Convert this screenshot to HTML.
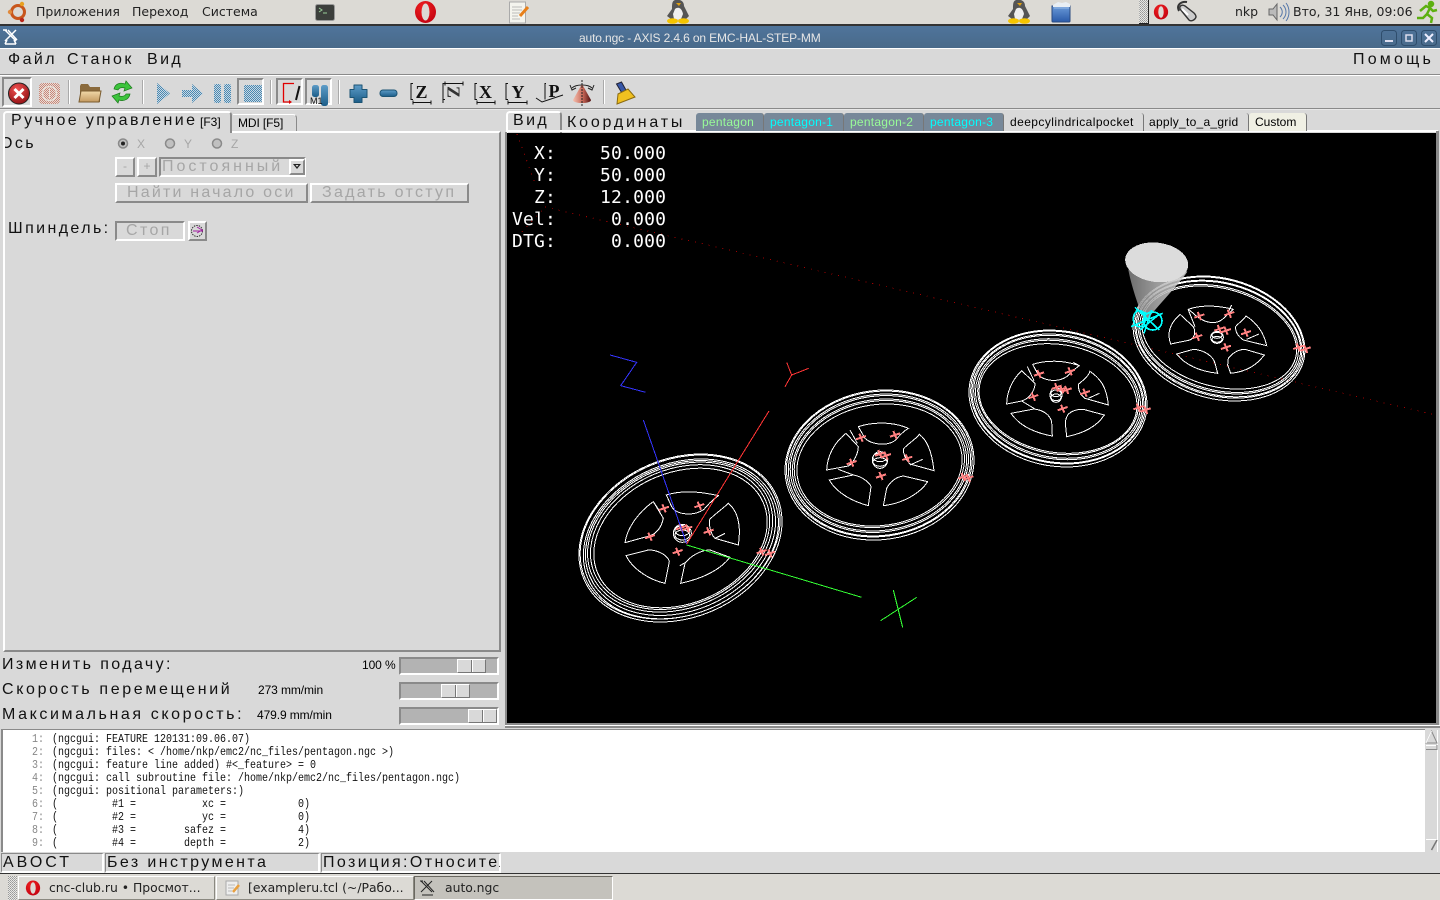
<!DOCTYPE html>
<html><head><meta charset="utf-8"><title>auto.ngc - AXIS</title>
<style>
html,body{margin:0;padding:0;width:1440px;height:900px;overflow:hidden;background:#d9d9d9}
body{position:relative;font-family:"Liberation Sans","Noto Sans CJK SC",sans-serif;color:#000}
.a{position:absolute}
.t{position:absolute;white-space:pre;font-size:16px;line-height:18px;letter-spacing:2.4px;color:#111}
.d{color:#a6a6a6}
.p{position:absolute;white-space:pre;font:12.5px/16px "DejaVu Sans",sans-serif;color:#222}
.s{position:absolute;white-space:pre;font-size:12px;line-height:14px}
.r{position:absolute;box-sizing:border-box;border:2px solid;border-color:#fff #8a8a8a #8a8a8a #fff;background:#d9d9d9}
.k{position:absolute;box-sizing:border-box;border:2px solid;border-color:#8a8a8a #fff #fff #8a8a8a;background:#d9d9d9}
.tr{position:absolute;box-sizing:border-box;border:2px solid;border-color:#8a8a8a #fff #fff #8a8a8a;background:#b3b3b3}
.kn{position:absolute;top:0;height:14px;width:29px;box-sizing:border-box;border:1px solid;border-color:#fff #777 #777 #fff;background:linear-gradient(90deg,#d9d9d9 0 13px,#777 13px 14px,#fff 14px 15px,#d9d9d9 15px)}
.tab{position:absolute;box-sizing:border-box;top:113px;height:18px;border-right:1px solid #777;border-radius:3px 3px 0 0;font-size:12px;line-height:19px;white-space:pre}
.l{position:absolute;left:52px;white-space:pre;font:12px/13px "Liberation Mono",monospace;transform:scaleX(.8333);transform-origin:0 0;color:#111}
.n{position:absolute;left:32px;white-space:pre;font:12px/13px "Liberation Mono",monospace;transform:scaleX(.8333);transform-origin:0 0;color:#888}
.dro{position:absolute;left:512px;white-space:pre;font:18px/22px "DejaVu Sans Mono",monospace;letter-spacing:.17px;color:#fff}
.tb{position:absolute;top:876px;height:24px;box-sizing:border-box;border:1px solid;border-color:#fff #8a8880 #8a8880 #fff;background:#dcdad5;font:12.4px/22px "DejaVu Sans",sans-serif;color:#222;white-space:pre}
</style></head><body>

<!-- top panel -->
<div class="a" style="left:0;top:0;width:1440px;height:25px;background:#dcdad5"></div>
<div class="a" style="left:0;top:24px;width:1440px;height:2px;background:#333"></div>
<span class="p" style="left:36px;top:4px">Приложения</span>
<span class="p" style="left:132px;top:4px">Переход</span>
<span class="p" style="left:202px;top:4px">Система</span>
<span class="p" style="left:1235px;top:4px">nkp</span>
<span class="p" style="left:1293px;top:4px">Вто, 31 Янв, 09:06</span>

<svg class="a" style="left:0;top:0" width="1440" height="26" viewBox="0 0 1440 26">
<defs>
<pattern id="hd" width="2" height="2" patternUnits="userSpaceOnUse"><rect width="2" height="2" fill="#e8e8e4"/><rect width="1" height="1" fill="#999"/><rect x="1" y="1" width="1" height="1" fill="#aaa"/></pattern>
<radialGradient id="op" cx=".4" cy=".3" r=".8"><stop offset="0" stop-color="#f02020"/><stop offset="1" stop-color="#c00010"/></radialGradient>
<g id="opera"><ellipse rx="10.500" ry="11" fill="url(#op)"/><ellipse rx="4" ry="8.500" fill="#dcdad5"/></g>
<g id="peng"><path d="M-3-12C2-13 6-11 6-6L8-2 11 4 8 7H-7L-11 4-6-3C-6-8-6-11-3-12Z" fill="#555"/><path d="M-3-3C1-6 4-3 5 2L3 7H-4L-5 2Z" fill="#eee"/><path d="M-2-9h5l-2 3Z" fill="#e0a010"/><ellipse cx="-5.500" cy="9" rx="5.500" ry="2.800" fill="#f5c400"/><ellipse cx="5.500" cy="9" rx="5.500" ry="2.800" fill="#f5c400"/></g>
<linearGradient id="fb" x1="0" y1="0" x2="0" y2="1"><stop offset="0" stop-color="#6a9ad8"/><stop offset="1" stop-color="#2a5aa8"/></linearGradient>
</defs>
<g transform="translate(18,12)"><circle r="6.500" fill="none" stroke="#c8561c" stroke-width="3"/><circle cx="-8" cy="0" r="2.200" fill="#e08a3c"/><circle cx="4" cy="-8" r="2.200" fill="#e8a020"/><circle cx="4" cy="8" r="2.200" fill="#b8261a"/></g>
<rect x="315.500" y="4.500" width="19" height="16" rx="2" fill="#3c3f3c" stroke="#999"/><path d="M319 8l3 2-3 2M323 13h4" stroke="#9c9" fill="none"/>
<use href="#opera" x="425.500" y="12"/>
<g transform="translate(518,12)"><rect x="-8.500" y="-10" width="16" height="21" fill="#f4f4ee" stroke="#aaa"/><path d="M-6-5h10M-6-2h10M-6 1h8M-6 4h6M-6 7h8" stroke="#bbb"/><path d="M2 4L10-5" stroke="#e8801a" stroke-width="3"/></g>
<use href="#peng" x="678" y="12"/>
<use href="#peng" x="1019" y="12"/>
<g transform="translate(1061,12)"><path d="M-9-6h18V9c0 1-1 1-1 1H-8c-1 0-1-1-1-1Z" fill="url(#fb)" stroke="#2a4a80"/><path d="M-8-7l5-3 4 1 4-1 4 2v3H-8Z" fill="#e8eef4"/><path d="M-7-4H8" stroke="#9abce8"/></g>
<rect x="1139" y="0" width="9" height="23" fill="url(#hd)"/><path d="M1148.500 0v24M1139 23.500h9" stroke="#222"/>
<g transform="translate(1161,12) scale(.68)"><use href="#opera"/></g>
<g transform="translate(1186,12)"><path d="M-6-3L3 8C5 10 9 8 10 5 10 3 9 2 8 1L-1-6C-4-8-7-6-6-3Z" fill="#ccc" stroke="#333" stroke-width="1.400"/><path d="M-7-1C-10-7-5-11 1-10" fill="none" stroke="#333" stroke-width="2"/><path d="M-4-3L2 3" stroke="#fff" stroke-width="2"/></g>
<g transform="translate(1278,12)"><path d="M-9-3h4l4-5V8L-5 3H-9Z" fill="#bbb" stroke="#666"/><path d="M2-5C5-2 5 2 2 5M5-7C9-3 9 3 5 7M8-9C12-4 12 4 8 9" fill="none" stroke="#5577aa"/></g>
<g transform="translate(1427,12)" fill="none" stroke="#5cb010" stroke-width="2.500"><circle cx="4" cy="-8" r="2" fill="#5cb010"/><path d="M-7-1L-1-6 3-4 0 2 5 6 4 11M0 2L-4 6-10 6M3-4L6-1 10-2"/></g>
</svg>

<!-- title bar -->
<div class="a" style="left:0;top:26px;width:1440px;height:22px;background:linear-gradient(#4f749b,#496a8a)"></div>
<div class="a" style="left:0;top:48px;width:1440px;height:1px;background:#fff"></div>
<span class="s" style="left:579px;top:31px;color:#e6e6e6;letter-spacing:-.13px">auto.ngc - AXIS 2.4.6 on EMC-HAL-STEP-MM</span>
<svg class="a" style="left:0;top:26px" width="1440" height="22" viewBox="0 26 1440 22">
<g fill="none" stroke="#fff" stroke-width="1.500"><path d="M5 30L16 41M16 30L5 41M8 30L17 40"/><path d="M7 30H3M5 44h11M7 40l-2 4M14 40l2 4"/></g>
<g fill="none" stroke="#2f4d6c"><rect x="1381.500" y="30.500" width="15" height="15" rx="3"/><rect x="1401.500" y="30.500" width="15" height="15" rx="3"/><rect x="1421.500" y="30.500" width="15" height="15" rx="3"/></g>
<path d="M1385 41h8" stroke="#dde" stroke-width="2"/><rect x="1406" y="35" width="6" height="6" fill="none" stroke="#dde" stroke-width="1.500"/><path d="M1425 34l8 8M1433 34l-8 8" stroke="#eef" stroke-width="2"/>
</svg>

<!-- menu -->
<span class="t" style="left:8px;top:51px">Файл</span>
<span class="t" style="left:67px;top:51px">Станок</span>
<span class="t" style="left:147px;top:51px">Вид</span>
<span class="t" style="left:1353px;top:51px;letter-spacing:3.2px">Помощь</span>
<div class="a" style="left:0;top:74px;width:1440px;height:1px;background:#8a8a8a"></div>
<div class="a" style="left:0;top:75px;width:1440px;height:1px;background:#fff"></div>
<div class="a" style="left:0;top:108px;width:1440px;height:1px;background:#8a8a8a"></div>
<div class="a" style="left:0;top:109px;width:1440px;height:1px;background:#e8e8e8"></div>

<!-- toolbar -->
<div class="a" style="left:2px;top:77px;width:30px;height:30px;box-sizing:border-box;border:2px solid;border-color:#8a8a8a #fff #fff #8a8a8a"></div>
<div class="a" style="left:237px;top:78px;width:27px;height:27px;box-sizing:border-box;border:2px solid;border-color:#8a8a8a #fff #fff #8a8a8a"></div>
<div class="a" style="left:276px;top:78px;width:27px;height:27px;box-sizing:border-box;border:2px solid;border-color:#8a8a8a #fff #fff #8a8a8a"></div>
<div class="a" style="left:305px;top:78px;width:27px;height:27px;box-sizing:border-box;border:2px solid;border-color:#8a8a8a #fff #fff #8a8a8a"></div>
<svg class="a" style="left:0;top:76px" width="660" height="34" viewBox="0 76 660 34">
<defs>
<pattern id="db" width="2" height="2" patternUnits="userSpaceOnUse"><rect width="2" height="2" fill="#c8d8e4"/><rect width="1" height="1" fill="#4a88b0"/><rect x="1" y="1" width="1" height="1" fill="#4a88b0"/></pattern>
<pattern id="dr" width="2" height="2" patternUnits="userSpaceOnUse"><rect width="2" height="2" fill="#e8dcd8"/><rect width="1" height="1" fill="#c88878"/><rect x="1" y="1" width="1" height="1" fill="#c88878"/></pattern>
<radialGradient id="rg" cx=".4" cy=".3" r=".8"><stop offset="0" stop-color="#f05050"/><stop offset="1" stop-color="#8a0c10"/></radialGradient>
<linearGradient id="bl" x1="0" y1="0" x2="0" y2="1"><stop offset="0" stop-color="#5d9cc8"/><stop offset="1" stop-color="#1c5d88"/></linearGradient>
<linearGradient id="fo" x1="0" y1="0" x2="0" y2="1"><stop offset="0" stop-color="#f0d8a8"/><stop offset="1" stop-color="#c49a60"/></linearGradient>
<linearGradient id="co" x1="0" y1="0" x2="1" y2="0"><stop offset="0" stop-color="#f4c0b0"/><stop offset=".55" stop-color="#c86858"/><stop offset="1" stop-color="#501010"/></linearGradient>
</defs>
<circle cx="19" cy="93.500" r="10.500" fill="url(#rg)" stroke="#222"/><path d="M14.500 89l9 9M23.500 89l-9 9" stroke="#fff" stroke-width="3"/>
<rect x="39" y="83" width="21" height="21" rx="4" fill="url(#dr)"/><circle cx="49.500" cy="93.500" r="7" fill="none" stroke="#e8e0d8" stroke-width="1.500"/><path d="M49.500 88v11" stroke="#e8e0d8"/>
<g stroke="#aaa"><path d="M68.500 80v24M142.500 80v24M270.500 80v24M338.500 80v24M603.500 80v24"/></g><g stroke="#fff"><path d="M69.500 80v24M143.500 80v24M271.500 80v24M339.500 80v24M604.500 80v24"/></g>
<path d="M80 86l1-2h7l2 3h10v15H80Z" fill="#8a6a3c"/><path d="M79 102l2-11h20l-2 11Z" fill="url(#fo)" stroke="#7a5c30"/>
<g fill="#3cc43c" stroke="#1c7a1c" stroke-width=".7"><path d="M114 89C115 84 120 82 125 84L126 81 132 88 124 91 125 88C121 87 119 88 118 90Z"/><path d="M130 94C129 99 124 102 119 100L118 103 112 96 120 93 119 96C123 97 125 96 126 94Z"/></g>
<path d="M157 83L170 93.500 157 104Z" fill="url(#db)"/>
<path d="M182 90h10v-6l11 9.500-11 9.500v-6h-10Z" fill="url(#db)"/>
<rect x="214" y="84" width="7" height="19" rx="2" fill="url(#db)"/><rect x="224" y="84" width="7" height="19" rx="2" fill="url(#db)"/>
<rect x="244" y="85" width="18" height="17" rx="1" fill="url(#db)"/>
<path d="M294 83.500H283.500V102H290" fill="none" stroke="#e00000" stroke-width="1.300"/><path d="M289 100l3 2-3 2Z" fill="#e00000"/><path d="M296 100l3.500-14" stroke="#111" stroke-width="2"/>
<rect x="312" y="85" width="7" height="12" rx="2.500" fill="url(#bl)"/><rect x="321" y="85" width="7" height="21" rx="2.500" fill="url(#bl)"/>
<text x="310" y="104" font-family="Liberation Sans" font-size="9" fill="#111">M1</text>
<path d="M354 85h8v4.500h5v8h-5v5h-8v-5h-4v-8h4Z" fill="url(#bl)" stroke="#1c5474" stroke-linejoin="round"/>
<rect x="380" y="90" width="17" height="6.500" rx="3" fill="url(#bl)" stroke="#1c5474"/>
<g fill="none" stroke="#111">
<path d="M413 83.500h-2v16h2M413 102.500h18M413 100.500v4M431 100.500v4"/>
<path d="M445 99.500h-2v-16h2M445 83.500h18M445 81.500v4M463 81.500v4M443 83v20"/>
<path d="M477 83.500h-2v16h2M477 102.500h18M477 100.500v4M495 100.500v4"/>
<path d="M508 83.500h-2v16h2M508 102.500h19M508 100.500v4M527 100.500v4"/>
<path d="M546 83.500h-1v16M536 98l6 4 21-7"/>
</g>
<g font-family="Liberation Serif" font-weight="bold" font-size="18" fill="#111" text-anchor="middle">
<text x="421.500" y="98">Z</text>
<text x="453.500" y="98" fill="#333" transform="rotate(90 453.500 92)">Z</text>
<text x="485.500" y="98">X</text>
<text x="518" y="98">Y</text>
<text x="554" y="97">P</text>
</g>
<path d="M582 84L591 100C591 104 573 104 573 100Z" fill="url(#co)"/><path d="M582 80v26" stroke="#222" stroke-dasharray="2 1"/><path d="M572 88C576 84 588 84 592 88" fill="none" stroke="#222"/><path d="M570 85l2 5 4-2M594 85l-2 5-4-2" fill="none" stroke="#222"/>
<path d="M616.500 84l5-2 5 9-4 3Z" fill="#3858a8" stroke="#223"/><path d="M617 104L635 97 628 89 618 94Z" fill="#f0c020" stroke="#8a6a10"/>
</svg>

<!-- left notebook -->
<div class="a" style="left:3px;top:131px;width:498px;height:521px;box-sizing:border-box;border:2px solid;border-color:#fff #8a8a8a #8a8a8a #fff"></div>
<div class="a" style="left:3px;top:111px;width:229px;height:22px;box-sizing:border-box;background:#d9d9d9;border:2px solid;border-bottom:0;border-color:#fff #8a8a8a #d9d9d9 #fff;border-radius:4px 4px 0 0"></div>
<div class="a" style="left:233px;top:114px;width:64px;height:17px;box-sizing:border-box;background:#d9d9d9;border-top:1px solid #fff;border-right:1px solid #8a8a8a;border-radius:0 4px 0 0"></div>
<span class="t" style="left:11px;top:112px">Ручное управление</span>
<span class="s" style="left:200px;top:115px">[F3]</span>
<span class="s" style="left:238px;top:116px;letter-spacing:-.1px">MDI [F5]</span>

<div class="a" style="left:5px;top:133px;width:60px;height:20px;overflow:hidden"><span class="t" style="left:-5px;top:2px">Ось</span></div>
<svg class="a" style="left:110px;top:135px" width="130" height="16" viewBox="110 135 130 16">
<g fill="#c0c0c0" stroke="#8a8a8a" stroke-width="1.500"><circle cx="123" cy="143.500" r="4.500"/><circle cx="170" cy="143.500" r="4.500"/><circle cx="217" cy="143.500" r="4.500"/></g><circle cx="123" cy="143.500" r="2" fill="#222"/>
</svg>
<span class="s d" style="left:137px;top:137px">X</span>
<span class="s d" style="left:184px;top:137px">Y</span>
<span class="s d" style="left:231px;top:137px">Z</span>

<div class="r" style="left:115px;top:157px;width:20px;height:20px;text-align:center;font-size:12px;line-height:15px;color:#a6a6a6">-</div>
<div class="r" style="left:137px;top:157px;width:20px;height:20px;text-align:center;font-size:12px;line-height:15px;color:#a6a6a6">+</div>
<div class="k" style="left:159px;top:157px;width:147px;height:20px"></div>
<span class="t d" style="left:162px;top:158px;letter-spacing:3px">Постоянный</span>
<div class="r" style="left:289px;top:159px;width:16px;height:16px"></div>
<svg class="a" style="left:291px;top:162px" width="12" height="10"><path d="M2 2h8L6 7Z" fill="#222"/><path d="M4.500 3h3L6 5Z" fill="#ddd"/></svg>
<div class="a" style="left:115px;top:183px;width:193px;height:20px;box-sizing:border-box;border:2px solid;border-color:#fff #8a8a8a #8a8a8a #fff"></div>
<div class="a" style="left:310px;top:183px;width:159px;height:20px;box-sizing:border-box;border:2px solid;border-color:#fff #8a8a8a #8a8a8a #fff"></div>
<span class="t d" style="left:127px;top:184px;letter-spacing:2.2px">Найти начало оси</span>
<span class="t d" style="left:322px;top:184px;letter-spacing:2.3px">Задать отступ</span>
<span class="t" style="left:8px;top:220px">Шпиндель:</span>
<div class="k" style="left:115px;top:221px;width:70px;height:20px"></div>
<span class="t d" style="left:126px;top:222px">Стоп</span>
<div class="r" style="left:188px;top:221px;width:19px;height:20px"></div>
<svg class="a" style="left:188px;top:221px" width="19" height="20"><circle cx="9" cy="10" r="5.500" fill="none" stroke="#333" stroke-dasharray="1.500 1"/><path d="M5 10h10M9 6l5 3-5 3" fill="none" stroke="#a020a0"/></svg>

<!-- bottom-left sliders -->
<span class="t" style="left:2px;top:656px">Изменить подачу:</span>
<span class="s" style="left:362px;top:658px;letter-spacing:-.1px">100 %</span>
<div class="tr" style="left:399px;top:657px;width:100px;height:18px"><div class="kn" style="left:56px"></div></div>
<span class="t" style="left:2px;top:681px;letter-spacing:2.65px">Скорость перемещений</span>
<span class="s" style="left:258px;top:683px;letter-spacing:-.1px">273 mm/min</span>
<div class="tr" style="left:399px;top:682px;width:100px;height:18px"><div class="kn" style="left:40px"></div></div>
<div class="a" style="left:0;top:705px;width:390px;height:20px;overflow:hidden"><span class="t" style="left:2px;top:1px;letter-spacing:2.6px">Максимальная скорость:</span></div>
<span class="s" style="left:257px;top:708px;letter-spacing:-.1px">479.9 mm/min</span>
<div class="tr" style="left:399px;top:707px;width:100px;height:18px"><div class="kn" style="left:67px"></div></div>

<!-- right notebook tabs -->
<div class="a" style="left:506px;top:111px;width:56px;height:22px;box-sizing:border-box;background:#d9d9d9;border:2px solid;border-bottom:0;border-color:#fff #8a8a8a #d9d9d9 #fff;border-radius:4px 4px 0 0"></div>
<span class="t" style="left:513px;top:112px">Вид</span>
<span class="t" style="left:567px;top:114px;letter-spacing:2.8px">Координаты</span>
<div class="a" style="left:506px;top:130px;width:932px;height:2px;background:#fff"></div>
<div class="tab" style="left:696px;width:68px;padding-left:6px;letter-spacing:.25px;background:#778899;color:#98fb98">pentagon</div>
<div class="tab" style="left:764px;width:80px;padding-left:6px;letter-spacing:.25px;background:#778899;color:#00ffff">pentagon-1</div>
<div class="tab" style="left:844px;width:80px;padding-left:6px;letter-spacing:.25px;background:#778899;color:#98fb98">pentagon-2</div>
<div class="tab" style="left:924px;width:80px;padding-left:6px;letter-spacing:.25px;background:#778899;color:#00ffff">pentagon-3</div>
<div class="tab" style="left:1004px;width:140px;padding-left:6px;letter-spacing:.43px;background:#d9d9d9;color:#000">deepcylindricalpocket</div>
<div class="tab" style="left:1144px;width:105px;padding-left:5px;letter-spacing:.27px;background:#d9d9d9;color:#000">apply_to_a_grid</div>
<div class="tab" style="left:1249px;width:58px;padding-left:6px;background:#f0f0e4;color:#000">Custom</div>

<!-- canvas frame -->
<div class="a" style="left:505px;top:132px;width:2px;height:592px;background:#8a8a8a"></div>
<div class="a" style="left:1436px;top:131px;width:3px;height:594px;background:#8a8a8a"></div>
<div class="a" style="left:505px;top:723px;width:934px;height:2px;background:#8a8a8a"></div>
<div class="a" style="left:505px;top:725px;width:935px;height:1px;background:#fff"></div>
<div class="a" style="left:505px;top:726px;width:935px;height:2px;background:#8a8a8a"></div>

<!-- canvas -->
<svg class="a" style="left:507px;top:133px;background:#000" width="929" height="590" viewBox="507 133 929 590" shape-rendering="crispEdges">
<defs>
<g id="x" fill="none" stroke="#ff8080" stroke-width="6"><path d="M-15 5L15-5M-5-12L5 12"/></g>
<linearGradient id="cn" x1="0" y1="0" x2="1" y2="0"><stop offset="0" stop-color="#808080"/><stop offset=".5" stop-color="#b4b4b4"/><stop offset="1" stop-color="#d0d0d0"/></linearGradient>
</defs>
<!-- dotted extents -->
<path d="M545 207L1436 415M517 134L536 186M522 232L545 207" stroke="#a00000" stroke-width="1" stroke-dasharray="1 6" fill="none"/>

<!-- rims -->
<g fill="none" stroke="#fff" stroke-width="1">
<g transform="translate(680.500,538) rotate(-23)"><ellipse rx="105" ry="79.600"/><ellipse rx="103.500" ry="77.500" cy="-1"/><ellipse rx="101" ry="75.500" cy="1"/><ellipse rx="98.500" ry="73"/><ellipse rx="96" ry="70.500" cy="-1"/><ellipse rx="93" ry="68" cy="-1"/><ellipse rx="90" ry="65.500"/></g>
<g transform="translate(879.500,465) rotate(-8)"><ellipse rx="94.800" ry="74.600"/><ellipse rx="93.300" ry="72.500" cy="-1"/><ellipse rx="91.500" ry="70.500"/><ellipse rx="89.500" ry="68" cy="-1"/><ellipse rx="87.500" ry="65.500"/><ellipse rx="85.500" ry="63" cy="-1"/><ellipse rx="83" ry="60.500"/></g>
<g transform="translate(1058,398.500) rotate(9.400)"><ellipse rx="89.500" ry="67.800"/><ellipse rx="88" ry="65.800" cy="-1"/><ellipse rx="86.500" ry="63.800"/><ellipse rx="85" ry="61.500" cy="-1"/><ellipse rx="83" ry="59"/><ellipse rx="81" ry="56.500" cy="-1"/><ellipse rx="79.500" ry="54"/></g>
<g transform="translate(1219,338.500) rotate(15)"><ellipse rx="87.500" ry="60.300"/><ellipse rx="86" ry="58.300" cy="-1"/><ellipse rx="84.500" ry="56"/><ellipse rx="83" ry="54" cy="-1"/><ellipse rx="81" ry="51.500"/><ellipse rx="79" ry="49" cy="-1"/></g>
</g>

<!-- wheels 1 & 2 spokes -->
<g transform="translate(570,340) scale(.33333)" fill="none" stroke="#fff" stroke-width="3">
<path d="M289 465C330 452 380 452 445 467C425 480 412 497 402 508C370 530 320 525 305 500Z"/>
<path d="M165 608C170 570 200 520 250 485L280 535C275 560 260 585 230 590Z"/>
<path d="M475 490C500 510 515 550 505 615L435 595C425 585 418 570 418 540C430 525 460 505 475 490Z"/>
<path d="M168 647L235 630C270 630 295 650 298 665L285 730C240 720 190 690 168 647Z"/>
<path d="M345 670C360 650 390 630 420 630L480 652C450 690 400 715 332 730Z"/>
<path d="M435 595L465 580M330 677L345 668M418 490L445 467M250 485L270 515"/>
<ellipse cx="337" cy="580" rx="27" ry="27"/><ellipse cx="337" cy="572" rx="22" ry="15"/><ellipse cx="337" cy="585" rx="22" ry="15"/>
<path d="M865 260C910 245 970 245 1015 265C990 280 980 300 970 305C940 320 900 310 885 295Z"/>
<path d="M770 390C772 350 790 310 828 280L865 320C865 340 850 370 835 378Z"/>
<path d="M840 270L862 310M805 388L850 405"/>
<path d="M1000 327C1015 310 1035 300 1048 283C1070 300 1085 330 1092 392L1020 372C1008 360 1000 345 1000 327Z"/>
<path d="M1020 375L1058 358"/>
<path d="M778 420L850 405C880 410 900 430 903 440L895 497C850 485 800 460 778 420Z"/>
<path d="M950 445C960 425 980 410 1000 408L1073 425C1050 460 1000 490 940 497Z"/>
<ellipse cx="930" cy="360" rx="23" ry="25"/><ellipse cx="930" cy="352" rx="21" ry="13"/><ellipse cx="930" cy="366" rx="21" ry="13"/>
</g>
<g transform="translate(570,340) scale(.33333)">
<use href="#x" x="282" y="505"/><use href="#x" x="388" y="497"/><use href="#x" x="416" y="574"/><use href="#x" x="240" y="590"/><use href="#x" x="323" y="635"/><use href="#x" x="333" y="563"/><use href="#x" x="352" y="565"/><use href="#x" x="575" y="635"/><use href="#x" x="600" y="640"/>
<use href="#x" x="873" y="293"/><use href="#x" x="975" y="285"/><use href="#x" x="1012" y="355"/><use href="#x" x="845" y="368"/><use href="#x" x="933" y="408"/><use href="#x" x="930" y="342"/><use href="#x" x="948" y="347"/><use href="#x" x="1180" y="411"/><use href="#x" x="1195" y="414"/>
</g>

<!-- wheels 3 & 4 -->
<g transform="translate(960,230) scale(.33333)" fill="none" stroke="#fff" stroke-width="3">
<path d="M218 403C260 390 310 390 358 407C340 420 330 430 320 440C290 460 250 450 235 435Z"/>
<path d="M140 522C140 490 155 450 185 422L225 460C225 480 210 505 185 513Z"/>
<path d="M202 410L222 452M340 397L358 407M185 513L225 537"/>
<path d="M355 463C370 450 385 440 390 424C420 445 440 470 445 525L375 505C360 495 355 480 355 463Z"/>
<path d="M385 505L418 490"/>
<path d="M153 550L222 537C250 540 270 555 275 575L277 618C230 610 180 590 153 550Z"/>
<path d="M325 552C340 540 355 537 370 538L433 555C410 590 370 610 320 620L316 580C316 570 320 560 325 552Z"/>
<ellipse cx="288" cy="495" rx="18" ry="22"/><ellipse cx="288" cy="490" rx="15" ry="10"/><ellipse cx="288" cy="502" rx="15" ry="10"/>
<path d="M685 238C720 225 770 225 820 238C800 255 790 270 775 275C745 285 715 265 700 250Z"/>
<path d="M632 342C620 310 630 280 660 253L700 290C710 310 700 325 690 330Z"/>
<path d="M685 240L705 290M815 225L805 245"/>
<path d="M827 290C835 280 850 270 858 258C885 275 910 300 920 347L850 330C835 320 825 305 827 290Z"/>
<path d="M860 328L897 312"/>
<path d="M650 372L700 358C735 360 760 380 765 400L773 430C730 425 680 410 650 372Z"/>
<path d="M805 385C820 365 840 358 855 358L913 375C890 405 860 425 812 430L803 405Z"/>
<ellipse cx="771" cy="322" rx="19" ry="18"/><ellipse cx="771" cy="316" rx="15" ry="9"/><ellipse cx="771" cy="328" rx="15" ry="9"/>
</g>
<g transform="translate(960,230) scale(.33333)">
<use href="#x" x="237" y="432"/><use href="#x" x="330" y="424"/><use href="#x" x="375" y="488"/><use href="#x" x="220" y="500"/><use href="#x" x="308" y="536"/><use href="#x" x="290" y="472"/><use href="#x" x="305" y="478"/><use href="#x" x="320" y="480"/><use href="#x" x="535" y="533"/><use href="#x" x="557" y="540"/>
<use href="#x" x="718" y="258"/><use href="#x" x="808" y="251"/><use href="#x" x="858" y="308"/><use href="#x" x="712" y="320"/><use href="#x" x="798" y="352"/><use href="#x" x="778" y="297"/><use href="#x" x="798" y="302"/><use href="#x" x="1015" y="352"/><use href="#x" x="1037" y="357"/>
</g>

<!-- axes -->
<g transform="translate(570,340) scale(.33333)" fill="none" stroke-width="3">
<path d="M350 612L220 240M120 45L200 67 152 137 227 157" stroke="#3535ff"/>
<path d="M350 612L597 213M650 67L665 105M716 85L665 105 645 140" stroke="#ff3535"/>
<path d="M350 615L875 772M970 750L998 862M1040 772L932 842" stroke="#35ff35"/>
</g>

<!-- cone and cyan tool marks -->
<g transform="translate(960,230) scale(.33333)">
<path d="M505 120L682 125C660 160 590 230 555 278 535 230 515 170 505 120Z" fill="url(#cn)" opacity=".86" shape-rendering="auto"/>
<g fill="none" stroke="#00ffff" stroke-width="5">
<ellipse cx="538" cy="266" rx="18" ry="24"/><ellipse cx="578" cy="273" rx="28" ry="27"/>
<path d="M525 232L598 300M513 290L608 250M552 310L575 240M540 300L595 255M528 240L560 250"/>
</g>
<ellipse cx="590" cy="97" rx="95" ry="59" transform="rotate(7 590 97)" fill="#dcdcdc"/>
</g>
</svg>

<!-- gcode text -->
<div class="a" style="left:0;top:729px;width:1440px;height:124px;background:#d9d9d9"></div>
<div class="a" style="left:1px;top:729px;width:1424px;height:1px;background:#8a8a8a"></div>
<div class="a" style="left:1px;top:729px;width:2px;height:123px;background:#8a8a8a"></div>
<div class="a" style="left:3px;top:730px;width:1422px;height:122px;background:#fff"></div>
<div class="a" style="left:1425px;top:730px;width:13px;height:122px;background:#d9d9d9;border-right:1px solid #fff;box-sizing:border-box"></div>
<svg class="a" style="left:1425px;top:730px" width="13" height="122"><path d="M6.500 1L12 13H1Z" fill="#d9d9d9" stroke="#8a8a8a"/><path d="M6.500 1L1 13" stroke="#fff"/><path d="M1 15h11v4H1Z" fill="#d9d9d9"/><path d="M1 19.500h11M12 15v5" stroke="#8a8a8a"/><path d="M1 15.500h10" stroke="#fff"/><path d="M1 110h11L6.500 120Z" fill="#d9d9d9"/><path d="M1 109.500h11" stroke="#fff"/><path d="M12 110L6.500 120" stroke="#777" stroke-width="1.500"/></svg>
<span class="n" style="top:733px">1:</span><span class="l" style="top:733px">(ngcgui: FEATURE 120131:09.06.07)</span>
<span class="n" style="top:746px">2:</span><span class="l" style="top:746px">(ngcgui: files: &lt; /home/nkp/emc2/nc_files/pentagon.ngc &gt;)</span>
<span class="n" style="top:759px">3:</span><span class="l" style="top:759px">(ngcgui: feature line added) #&lt;_feature&gt; = 0</span>
<span class="n" style="top:772px">4:</span><span class="l" style="top:772px">(ngcgui: call subroutine file: /home/nkp/emc2/nc_files/pentagon.ngc)</span>
<span class="n" style="top:785px">5:</span><span class="l" style="top:785px">(ngcgui: positional parameters:)</span>
<span class="n" style="top:798px">6:</span><span class="l" style="top:798px">(         #1 =           xc =            0)</span>
<span class="n" style="top:811px">7:</span><span class="l" style="top:811px">(         #2 =           yc =            0)</span>
<span class="n" style="top:824px">8:</span><span class="l" style="top:824px">(         #3 =        safez =            4)</span>
<span class="n" style="top:837px">9:</span><span class="l" style="top:837px">(         #4 =        depth =            2)</span>

<!-- status bar -->
<div class="k" style="left:1px;top:853px;width:103px;height:20px;border-width:1px 2px 2px 1px"></div>
<div class="k" style="left:105px;top:853px;width:215px;height:20px;border-width:1px 2px 2px 1px"></div>
<div class="k" style="left:321px;top:853px;width:180px;height:20px;border-width:1px 2px 2px 1px"></div>
<span class="t" style="left:3px;top:854px;letter-spacing:3px">АВОСТ</span>
<span class="t" style="left:107px;top:854px">Без инструмента</span>
<div class="a" style="left:322px;top:853px;width:178px;height:19px;overflow:hidden"><span class="t" style="left:1px;top:1px">Позиция:Относительная</span></div>
<div class="a" style="left:0;top:873px;width:1440px;height:1px;background:#333"></div>

<!-- taskbar -->
<div class="a" style="left:0;top:874px;width:1440px;height:26px;background:#dcdad5"></div>
<svg class="a" style="left:8px;top:876px" width="9" height="24"><rect width="9" height="24" fill="url(#hd)"/></svg>
<div class="tb" style="left:18px;width:197px"><span class="a" style="left:30px;top:0">cnc-club.ru • Просмот...</span></div>
<div class="tb" style="left:216px;width:198px"><span class="a" style="left:31px;top:0">[exampleru.tcl (~/Рабо...</span></div>
<div class="tb" style="left:414px;width:199px;background:#c4c2bc;border-color:#6a6860 #fff #fff #6a6860"><span class="a" style="left:30px;top:0">auto.ngc</span></div>
<svg class="a" style="left:0;top:876px" width="450" height="24" viewBox="0 876 450 24">
<g transform="translate(33,888) scale(.68)"><use href="#opera"/></g>
<g transform="translate(232,888)"><rect x="-6" y="-7" width="12" height="14" fill="#eee" stroke="#aaa"/><path d="M-4-3h7M-4 0h6M-4 3h4" stroke="#bbb"/><path d="M1 4L7-3" stroke="#e8a040" stroke-width="2.500"/></g>
<g fill="none" stroke="#222"><path d="M421 881l11 11M432 881l-11 11M424 881l10 11M423 881h-3M422 895h11"/></g>
</svg>

<!-- DRO -->
<span class="dro" style="top:143px">  X:    50.000</span>
<span class="dro" style="top:165px">  Y:    50.000</span>
<span class="dro" style="top:187px">  Z:    12.000</span>
<span class="dro" style="top:209px">Vel:     0.000</span>
<span class="dro" style="top:231px">DTG:     0.000</span>

</body></html>
